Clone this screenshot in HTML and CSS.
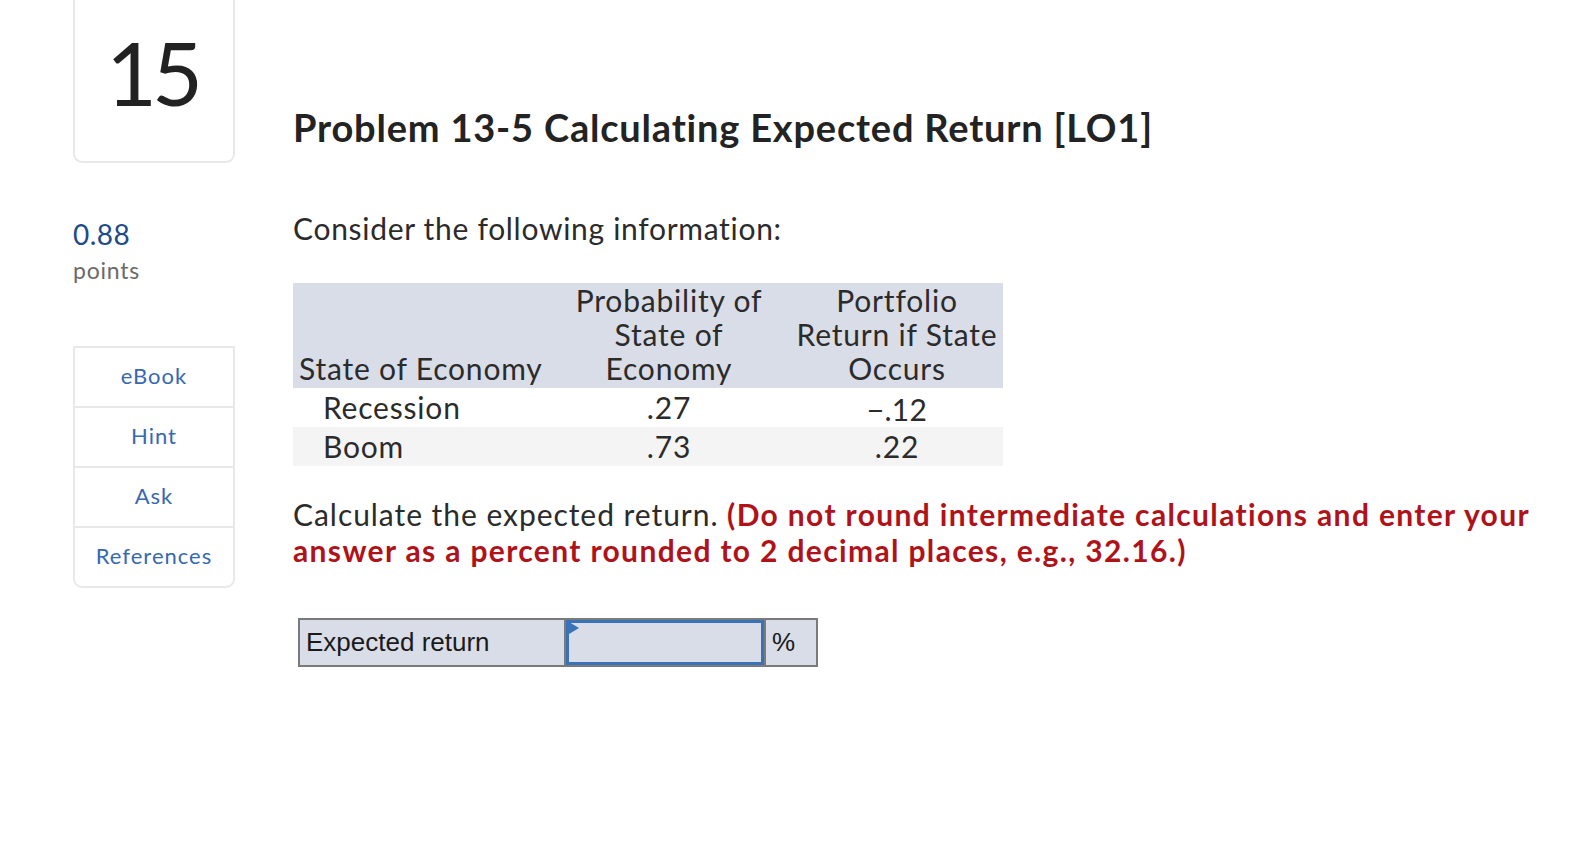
FILE: index.html
```html
<!DOCTYPE html>
<html lang="en">
<head>
<meta charset="utf-8">
<title>Problem 13-5</title>
<link rel="stylesheet" href="styles.css">
</head>
<body>
<div class="page">
  <aside class="side">
    <div class="qnum">15</div>
    <div class="score">
      <div class="score-value">0.88</div>
      <div class="score-label">points</div>
    </div>
    <nav class="tools">
      <a class="tool">eBook</a>
      <a class="tool">Hint</a>
      <a class="tool">Ask</a>
      <a class="tool">References</a>
    </nav>
  </aside>
  <main class="main">
    <h1 class="title">Problem 13-5 Calculating Expected Return [LO1]</h1>
    <p class="intro">Consider the following information:</p>
    <table class="data">
      <colgroup>
        <col class="c1"><col class="c2"><col class="c3">
      </colgroup>
      <thead>
        <tr>
          <th class="left">State of Economy</th>
          <th>Probability of<br>State of<br>Economy</th>
          <th>Portfolio<br>Return if State<br>Occurs</th>
        </tr>
      </thead>
      <tbody>
        <tr>
          <td class="left indent">Recession</td>
          <td>.27</td>
          <td><span class="neg">−.12</span></td>
        </tr>
        <tr class="alt">
          <td class="left indent">Boom</td>
          <td>.73</td>
          <td>.22</td>
        </tr>
      </tbody>
    </table>
    <p class="task">Calculate the expected return. <strong class="warn">(Do not round intermediate calculations and enter your answer as a percent rounded to 2 decimal places, e.g., 32.16.)</strong></p>
    <table class="answer">
      <tr>
        <td class="a-label">Expected return</td>
        <td class="a-input"><span class="flag"></span></td>
        <td class="a-unit">%</td>
      </tr>
    </table>
  </main>
</div>
</body>
</html>
```

FILE: styles.css
```css
html, body {
  margin: 0;
  padding: 0;
  background: #ffffff;
}

body {
  font-family: Lato, "Open Sans", sans-serif;
  color: #2b2b2b;
}

.page {
  display: flex;
  gap: 58px;
  padding-left: 73px;
  padding-right: 40px;
}

.side {
  width: 162px;
  flex: 0 0 162px;
}

.qnum {
  box-sizing: border-box;
  height: 163px;
  border: 2px solid #e8e8e8;
  border-top: none;
  border-radius: 0 0 9px 9px;
  display: flex;
  align-items: center;
  justify-content: center;
  font-size: 88px;
  letter-spacing: -5px;
  line-height: 1;
  color: #222;
  padding-bottom: 18px;
  padding-right: 4px;
}

.score {
  margin-top: 53px;
}

.score-value {
  font-size: 28px;
  line-height: 36px;
  color: #1d4b8a;
  letter-spacing: 0.5px;
}

.score-label {
  font-size: 23px;
  line-height: 36px;
  color: #6a6a6a;
  letter-spacing: 0.8px;
}

.tools {
  margin-top: 58px;
  display: flex;
  flex-direction: column;
  border: 2px solid #e8e8e8;
  border-radius: 0 0 9px 9px;
}

.tool {
  box-sizing: border-box;
  height: 60px;
  padding-bottom: 3px;
  display: flex;
  align-items: center;
  justify-content: center;
  font-size: 22px;
  letter-spacing: 1px;
  color: #3669b0;
  border-top: 2px solid #e8e8e8;
}

.tool:first-child {
  border-top: none;
  height: 58px;
}

.main {
  flex: 1;
}

.title {
  margin: 104px 0 0;
  font-size: 38px;
  line-height: 46px;
  font-weight: 700;
  letter-spacing: 0.8px;
  color: #232323;
}

.intro {
  margin: 60px 0 0;
  font-size: 30px;
  line-height: 36px;
  letter-spacing: 0.7px;
}

.data {
  margin-top: 37px;
  border-collapse: collapse;
  width: 710px;
  font-size: 30px;
  letter-spacing: 0.8px;
}

.data .c1 { width: 254px; }
.data .c2 { width: 244px; }
.data .c3 { width: 212px; }

.data thead tr {
  background: #d9dde7;
}

.data th {
  font-weight: 400;
  line-height: 34px;
  padding: 0 4px 3px;
  vertical-align: bottom;
  text-align: center;
  white-space: nowrap;
}

.data td {
  line-height: 39px;
  padding: 0 6px;
  text-align: center;
}

.data .left {
  text-align: left;
}

.data th.left {
  padding-left: 6px;
}

.data .indent {
  padding-left: 30px;
}

.data .alt {
  background: #f4f4f4;
}

.neg {
  vertical-align: -2px;
  line-height: 1;
  letter-spacing: 0.3px;
}

.task {
  margin: 30px 0 0;
  font-size: 30px;
  line-height: 36px;
  letter-spacing: 0.95px;
}

.warn {
  color: #b0121a;
  font-weight: 700;
  letter-spacing: 1.35px;
}

.answer {
  margin: 50px 0 0 5px;
  border-collapse: collapse;
  border: 2px solid #7a7a7a;
  font-family: "Liberation Sans", Arial, sans-serif;
  font-size: 26px;
  color: #1a1a1a;
}

.answer td {
  height: 45px;
  padding: 0;
  background: #d9dde7;
  border: 2px solid #7a7a7a;
}

.a-label {
  width: 258px;
  padding-left: 6px !important;
}

.a-input {
  width: 198px;
  position: relative;
  box-shadow: inset 0 0 0 3px #3a72ba;
}

.flag {
  position: absolute;
  left: 3px;
  top: 2px;
  width: 0;
  height: 0;
  border-top: 6px solid transparent;
  border-bottom: 6px solid transparent;
  border-left: 10px solid #3a72ba;
}

.a-unit {
  width: 44px;
  padding-left: 6px !important;
}
```
